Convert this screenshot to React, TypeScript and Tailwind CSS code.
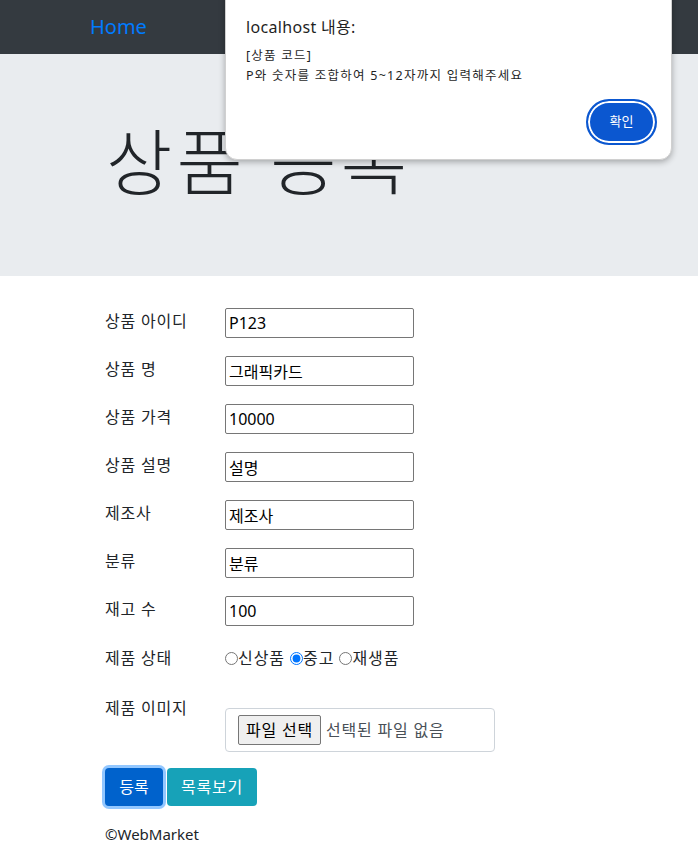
/**
 * 상품 등록 페이지 + 브라우저 알림창
 */

const FONT = "font-['Segoe_UI','Noto_Sans','Noto_Sans_CJK_KR',sans-serif]";

const FIELDS = [
  { label: '상품 아이디', value: 'P123' },
  { label: '상품 명', value: '그래픽카드' },
  { label: '상품 가격', value: '10000' },
  { label: '상품 설명', value: '설명' },
  { label: '제조사', value: '제조사' },
  { label: '분류', value: '분류' },
  { label: '재고 수', value: '100' },
];

const CONDITIONS = ['신상품', '중고', '재생품'];

const AlertDialog = () => (
  <div className="absolute left-[225px] top-[-12px] w-[447px] h-[172px] bg-white rounded-[12px] shadow-[0_2px_6px_rgba(0,0,0,0.3)] border border-[#d0d0d0]">
    <p className="absolute left-[20px] top-[26px] text-[16px] leading-[24px] text-[#1f1f1f] tracking-[0.02em]">localhost 내용:</p>
    <div className="absolute left-[20px] top-[57px] text-[12.5px] leading-[20px] text-[#1f1f1f] tracking-[0.1em]">
      <p>[상품 코드]</p>
      <p>P와 숫자를 조합하여 5~12자까지 입력해주세요</p>
    </div>
    <button className="absolute left-[360px] top-[110px] w-[71px] h-[46px] rounded-full bg-[#0b57d0] text-white text-[13px] border-2 border-[#0b57d0] shadow-[inset_0_0_0_2px_#ffffff]">
      확인
    </button>
  </div>
);

export default function App() {
  return (
    <div className={`relative min-h-[862px] bg-white text-[#212529] ${FONT}`}>
      {/* 상단 네비게이션 */}
      <nav className="h-[54px] bg-[#343a40] flex items-center pl-[90px]">
        <a className="text-[20px] text-[#007bff]">Home</a>
      </nav>

      {/* 점보트론 */}
      <div className="h-[222px] bg-[#e9ecef] pl-[106px] pt-[64px]">
        <h1 className="text-[72px] font-light leading-[86px] tracking-[0.06em]">상품 등록</h1>
      </div>

      {/* 등록 폼 */}
      <form className="pl-[105px] pt-[32px] flex flex-col text-[16px]">
        <div className="flex flex-col gap-[18px]">
          {FIELDS.map((f) => (
            <div key={f.label} className="flex h-[30px]">
              <label className="w-[120px] pt-[1px] leading-[24px] tracking-[0.05em]">{f.label}</label>
              <input
                readOnly
                value={f.value}
                className="w-[189px] h-[30px] border border-[#767676] rounded-[2px] px-[3px] text-[16px] text-black outline-none"
              />
            </div>
          ))}
        </div>

        <div className="flex items-center h-[24px] mt-[20px]">
          <span className="w-[120px] tracking-[0.05em]">제품 상태</span>
          <div className="flex items-center gap-[5px]">
            {CONDITIONS.map((c) => (
              <label key={c} className="flex items-center">
                <input
                  type="radio"
                  name="condition"
                  defaultChecked={c === '중고'}
                  className="m-0 w-[13px] h-[13px] accent-[#0075ff]"
                />
                <span className="tracking-[0.06em]">{c}</span>
              </label>
            ))}
          </div>
        </div>

        <div className="flex mt-[26px]">
          <span className="w-[120px] leading-[24px] tracking-[0.05em]">제품 이미지</span>
          <div className="mt-[12px] w-[270px] h-[44px] border border-[#ced4da] rounded-[4px] flex items-center pl-[12px]">
            <span className="h-[30px] px-[7px] flex items-center bg-[#efefef] border border-[#767676] rounded-[2px] text-black tracking-[0.05em]">
              파일 선택
            </span>
            <span className="ml-[5px] text-[#495057] tracking-[0.05em]">선택된 파일 없음</span>
          </div>
        </div>

        <div className="flex gap-[4px] mt-[16px]">
          <button
            type="button"
            className="h-[38px] w-[58px] rounded-[4px] bg-[#0062cc] text-white shadow-[0_0_0_3px_rgba(38,143,255,0.5)]"
          >
            등록
          </button>
          <button type="button" className="h-[38px] w-[90px] rounded-[4px] bg-[#17a2b8] text-white tracking-[0.05em]">
            목록보기
          </button>
        </div>
      </form>

      <footer className="pl-[105px] mt-[16px] leading-[24px] text-[15px]">©WebMarket</footer>

      <AlertDialog />
    </div>
  );
}
